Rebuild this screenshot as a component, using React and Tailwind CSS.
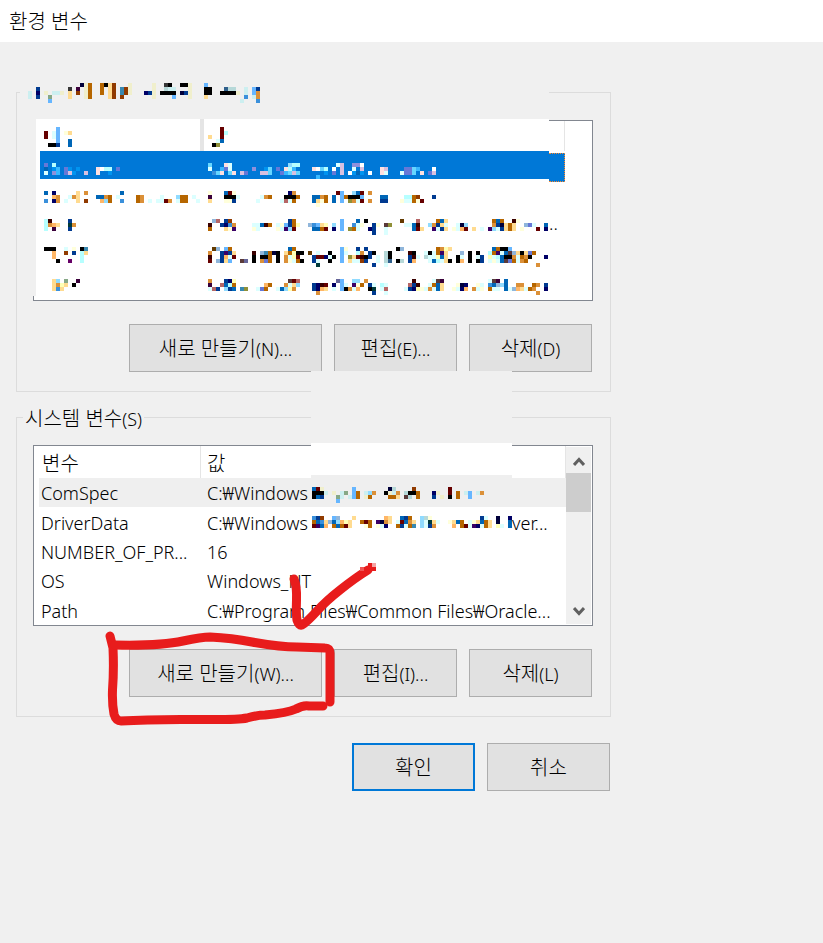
import React from "react";
import clsx from "clsx";

const CELL = 4;

// Colours of the censored blocks
const PALETTE = {
  k: "#000000", d: "#383838", i: "#00003a", n: "#000066", b: "#003a90", B: "#0066b6",
  s: "#3a90db", l: "#66b6ff", L: "#90dbff", c: "#b6ffff", C: "#dbffff", a: "#cceff0",
  o: "#db9038", O: "#b66600", e: "#903a00", p: "#ffdb90", q: "#ffb666", y: "#ffffdb",
  Y: "#ffffb6", j: "#f0efcc", r: "#660000", R: "#3a0000", m: "#3a003a", u: "#3a0066",
  g: "#86a886", t: "#3888b0", T: "#003a3a", h: "#909038", f: "#633a00", G: "#b6d8d8",
  z: "#30608c", x: "#b66666", v: "#9090db", V: "#6678d7", S: "#0094f0", K: "#38b8ff",
  A: "#66d6ff", W: "#ffffff", P: "#ffe0e0", D: "#d8c0e0", E: "#90b6db", F: "#5a3a3a",
  M: "#660066", Z: "#666699",
};

const LEGEND_MOSAIC = [
  "20ijO 25Okpe 32j 38j 41dk 45kkj 51l",
  "9b 17d 19m 21jO 25O 27pe 30te 32j 38j 41Gaa 47j 51kk 56zGG 61a 63lb",
  "7a 9n 11j 13aaj 17p 19e 21jO 25O 27pe 30te 32j 36nbj 40kkkk 45ibj 51kk 55kkkkj 61a 63lo",
  "7a 9b 12g 17p 21jO 27pe 30e 38j 43l 47j 51p 61s 63ao",
  "12l 60a 64s",
];

const USER_ROWS = [
  {
    key: "r1",
    top: 12,
    selected: true,
    mosaic: [
      "11V 13c 52A 56PC 72Lcc 84CD 88vvW",
      "11B 13SK 16VS 19S 24PWcc 29V 52C 55KVC 63v 66SA 69V 71PcK 78PWAc 83W 85D 88C 90D 95PD 101VVAK 108W",
      "11C 13vK 16VDS 21D 24P 27S 53sAP 57AP 60DV 65DDA 70VKADA 81S 83V 85D 87WSB 90S 92W 95PC 100CVVA 105P 107VD",
      "79K",
    ],
  },
  {
    key: "r2",
    top: 11,
    mosaic: [
      "11B 13n 19p 21o 30B 52y 56Bry 72no 84r 85l 88LBr 92o",
      "13qo 17Cop 24BBoO 29C 34Oo 40C 44LOO 48C 52m 56kkkC 65CoO 71kkkO 78BBoO 83B 85l 86Okkkl 95BB 101ccOe 108b",
      "11s 13no 16C 19p 21e 25qLO 30s 34Oo 37C 39CCro 44COO 49C 52p 56yyb 64C 70CxCO 78BpyO 83B 85l 87hoCr 92o 95bb 100yCCOyr",
      "79y",
    ],
  },
  {
    key: "r3",
    top: 10,
    mosaic: [
      "11cR 17b 53Ex 56be 72bO 85l 89B 91k 100f 104x 109OBp 123OBO 128Ry",
      "11coqp 17To 52R 55bnso 63CCBRO 69CylbOY 77EslpY 83L 85l 88sCy 93b 94y 96Fh 101CCBR 107LobpC 114Ci 116L 123obipOp 131EVC 136B",
      "11c 13m 17b 52O 56pyu 63yC 69yCuLr 78BBOr 83n 85l 87hOC 92nb 96C 103Brp 108uCbp 113yCqr 118p 120C 122uLCbpOp 130y 134r 136n",
      "93b 96C",
    ],
    tail: "..",
  },
  {
    key: "r4",
    top: 9,
    mosaic: [
      "11kkk 16C 18y 20kt 53fE 56lO 72BO 85ly 89b 91b 99kE 109OoYp 123BOkkl",
      "13q 16e 18b 20cp 52o 55bubp 63R 65EtOik 71pOYk 75k 77f 79C 82k 85lC 89co 92bk 96Gk 102Rk 106Ck 108COup 115E 117k 119k 122cOuCBFEpkpVO",
      "13q 20c 52R 55bqCr 63k 65kkO 69k 71oCYr 78brrn 82Ck 85l 87hprRkb 94C 96Gk 102bRC 106GC 108CYBp 114kC 117k 119Cb 122YCcBkkoCOok 136n",
      "14k 17M 20c 52r 54Ebpl 60FZ 63k 65oVO 69k 71oyCO 75k 78bC 82k 85l 87pCCeb 94C 96Gz 99kG 102bq 107C 108BcCpk 114kq 117k 119kb 122CyCBFVOCoO",
      "79T 93b 96C 134o",
    ],
  },
  {
    key: "r5",
    top: 12,
    mosaic: [
      "13pL 16g 19m 52o 56bnY 72Frx 84Z 85l 88LL 91o 103R 108CFm 122CFm 126B",
      "13poY 16p 18k 52m 55xBcO 66qO 71oCpL 78bnRr 83n 85lC 88uyO 92bC 95cC 102xbR 107COBp 114yin 119yC 122sBEL 126B 129oo 133Oo 136b",
      "13psp 52Cxb 56LbB 60th 64CVO 69CBLYo 78bnqp 83C 85lkoCq 92kT 95Cx 101CbnYyCoCBp 113yCnq 118oCy 122OCC 126BCEqpCOo 136n",
      "79o 93b 96C 134o",
    ],
  },
];

const SYSTEM_ROWS = [
  {
    name: "ComSpec",
    value: "C:₩Windows",
    selected: true,
    top: 9,
    mosaic: [
      "78Brj 88l 97iG 103e 112r",
      "78kkka 83j 85ag 88lO 91aLo 96kjao 101GkkO 108nj 112r 114O 116al 119ao",
      "78kBb 84ga 87alO 91j 92O 97OOp 101FG 104O 108b 110j 112k 114O 117l",
      "84l",
    ],
  },
  {
    name: "DriverData",
    value: "C:₩Windows",
    rest: "ver...",
    top: 8,
    mosaic: [
      "78sb 80e 83lE 88p 96qp 100BbO 105LGy 120bC 124i 127n",
      "78OBsp 82EBLqYp 90OrO 94uiop 99CrBop 105LCTpC 112ypBO 117CypBOp 124i 127B",
      "78ruBq 83OBOrp 91yO 94yCn 99ObCOt 105LCbo 113q 115Or 117CunCOp 124YC 127B",
    ],
  },
  { name: "NUMBER_OF_PR...", value: "16" },
  { name: "OS", value: "Windows_NT" },
  { name: "Path", value: "C:₩Program Files₩Common Files₩Oracle..." },
];

// Every token is a start column followed by one colour letter per block
const toBlocks = (lines, from, to) =>
  lines.flatMap((line, row) =>
    line.split(" ").flatMap((token) => {
      const start = parseInt(token, 10);
      const letters = token.replace(/^\d+/, "");
      return [...letters].map((letter, i) => ({ col: start + i, row, fill: PALETTE[letter] }));
    })
  ).filter((b) => b.fill && b.col >= from && b.col < to);

const Mosaic = ({ lines, from, to, top = 0 }) => (
  <svg
    aria-hidden="true"
    width={(to - from) * CELL}
    height={lines.length * CELL + top}
    shapeRendering="crispEdges"
    className="block shrink-0"
  >
    {toBlocks(lines, from, to).map((b, i) => (
      <rect
        key={i}
        x={(b.col - from) * CELL}
        y={b.row * CELL + top}
        width={CELL}
        height={CELL}
        fill={b.fill}
      />
    ))}
  </svg>
);

// --- Button: Korean label plus the shortcut in brackets ---
const DialogButton = ({ label, hint, wide, primary }) => (
  <button
    type="button"
    className={clsx(
      "h-12 shrink-0 bg-[#e1e1e1] pt-[2px] text-[20px] leading-6",
      wide ? "w-[193px]" : "w-[123px]",
      primary ? "border-2 border-[#0078d7]" : "border border-[#adadad]"
    )}
  >
    {label}
    {hint && <span className="text-[18px]">{hint}</span>}
  </button>
);

const ButtonRow = ({ keys }) => (
  <div className="mt-[23px] flex justify-end gap-3 pr-px">
    <DialogButton wide label="새로 만들기" hint={`(${keys[0]})...`} />
    <DialogButton label="편집" hint={`(${keys[1]})...`} />
    <DialogButton label="삭제" hint={`(${keys[2]})`} />
  </div>
);

const UserVariables = () => (
  <fieldset className="relative border border-[#dcdcdc] pr-[17px] pb-[19px] pl-4">
    <legend className="-ml-[13px] h-6 w-[529px] bg-[#f0f0f0]">
      <Mosaic lines={LEGEND_MOSAIC} from={5} to={70} top={3} />
    </legend>
    <div className="relative mt-4 h-[181px] border border-[#828790] bg-white">
      <table className="w-[531px] table-fixed border-separate border-spacing-0">
        <colgroup>
          <col className="w-[6px]" />
          <col className="w-[164px]" />
          <col className="w-[345px]" />
          <col className="w-4" />
        </colgroup>
        <thead>
          <tr className="h-[30px]">
            <th className="p-0" />
            <th className="border-r-4 border-[#e5e5e5] p-0 align-top">
              <Mosaic lines={["14l", "11r 13Cl 16yp", "11r 13Cl", "14l 17B", "12kkb 17B"]} from={10} to={50} top={6} />
            </th>
            <th className="p-0 align-top">
              <Mosaic lines={["55r", "55rc", "52p 55r", "54CB", "53kh"]} from={51} to={80} top={6} />
            </th>
            <th className="border-r border-[#e5e5e5] p-0" />
          </tr>
        </thead>
        <tbody>
          {USER_ROWS.map((row, i) => (
            <tr key={row.key} className={row.selected ? "h-[29px]" : "h-[29px]"}>
              <td className="p-0" />
              <td className="p-0 align-top">
                <div className={clsx("h-7", row.selected && "bg-[#0078d7]")}>
                  <Mosaic lines={row.mosaic} from={10} to={51} top={row.top} />
                </div>
              </td>
              <td className="p-0 align-top">
                <div className={clsx("h-7", row.selected && "bg-[#0078d7]")}>
                  <Mosaic lines={row.mosaic} from={51} to={138} top={row.top} />
                </div>
              </td>
              <td className="p-0 align-top">
                {/* The focus frame hangs slightly below its row */}
                {row.selected && (
                  <div className="relative h-7">
                    <div className="absolute top-[2px] h-[29px] w-full border border-l-0 border-dotted border-[#ff8728] bg-[#0078d7]" />
                  </div>
                )}
                {row.tail && <span className="block h-7 text-[18px] leading-7">{row.tail}</span>}
              </td>
            </tr>
          ))}
        </tbody>
      </table>
      {/* Erased edge of the list */}
      <div className="absolute -top-[2px] -left-px h-[177px] w-[3px] bg-[#f0f0f0]" />
      <div className="absolute -top-[2px] left-[2px] h-[3px] w-[513px] bg-white" />
      <div className="absolute -top-[2px] left-[166px] h-[3px] w-1 bg-[#e5e5e5]" />
    </div>
    <ButtonRow keys={["N", "E", "D"]} />
  </fieldset>
);

const ScrollBar = () => (
  <div className="my-px mr-px flex w-[25px] shrink-0 flex-col items-center bg-[#f0f0f0]">
    <button type="button" aria-label="위로" className="flex h-[26px] w-full items-center justify-center pt-[2px]">
      <svg width="12" height="9" viewBox="0 0 12 9" fill="none" stroke="#606060" strokeWidth="3">
        <path d="M1 8 L6 2.5 L11 8" />
      </svg>
    </button>
    <div className="h-[39px] w-full bg-[#cdcdcd]" />
    <button type="button" aria-label="아래로" className="mt-auto flex h-[26px] w-full items-center justify-center">
      <svg width="12" height="9" viewBox="0 0 12 9" fill="none" stroke="#606060" strokeWidth="3">
        <path d="M1 1 L6 6.5 L11 1" />
      </svg>
    </button>
  </div>
);

const SystemVariables = () => (
  <fieldset className="border border-[#dcdcdc] pr-[17px] pb-[19px] pl-4">
    <legend className="-ml-[10px] h-6 px-[2px] text-[20px] leading-7">
      시스템 변수<span className="text-[18px]">(S)</span>
    </legend>
    <div className="mt-4 flex h-[181px] border border-[#828790] bg-white">
      <table className="min-w-0 flex-1 table-fixed border-separate border-spacing-0 text-left text-[18px]">
        <colgroup>
          <col className="w-[5px]" />
          <col className="w-[162px]" />
          <col />
        </colgroup>
        <thead>
          <tr className="h-8">
            <th className="p-0" />
            <th className="border-r border-[#e5e5e5] p-0 pt-1 pl-[3px] text-[20px] leading-6 font-light">변수</th>
            <th className="border-r border-[#e5e5e5] p-0 pt-1 pl-[6px] text-[20px] leading-6 font-light">값</th>
          </tr>
        </thead>
        <tbody>
          {SYSTEM_ROWS.map((row) => (
            <tr key={row.name} className="h-[29px] leading-[27px] whitespace-nowrap">
              <td className="p-0" />
              <td className={clsx("p-0 pt-[2px] pl-[2px]", row.selected && "bg-[#efefef]")}>{row.name}</td>
              <td className={clsx("p-0 pl-[6px]", row.selected && "bg-[#efefef]")}>
                <div className="flex h-[29px]">
                  <span className={clsx("shrink-0 pt-[2px]", row.mosaic && "w-[105px]")}>{row.value}</span>
                  {row.mosaic && <Mosaic lines={row.mosaic} from={78} to={128} top={row.top} />}
                  {row.rest && <span className="pt-[2px]">{row.rest}</span>}
                </div>
              </td>
            </tr>
          ))}
        </tbody>
      </table>
      <ScrollBar />
    </div>
    <ButtonRow keys={["W", "I", "L"]} />
  </fieldset>
);

// Red pen marks: a loop round the "new" button and a tick above it
const PenMarks = () => (
  <svg
    aria-hidden="true"
    viewBox="16 405 595 312"
    className="pointer-events-none absolute top-0 left-0 h-[312px] w-[595px] overflow-visible"
    fill="none"
    stroke="#e81c1c"
    strokeWidth="9"
    strokeLinecap="round"
    strokeLinejoin="round"
  >
    <path d="M110 636 L113 648 Q114 670 112.500 690 Q112 704 114 714 Q116 721 121 721 Q150 719 200 719.500 Q237 720 247 718 Q258 715 265 715 Q287 713 296 709 Q303 705 309 706 L323 706" />
    <path d="M115 645 Q160 646 183 641 Q202 637 210 637 Q232 638 252 642 Q280 647 297 647 L325 648 Q330 648 330 653 L330 702" />
    <path d="M294 579 Q297 586 296.500 600 Q296 615 297 620 Q299 626 302 625 Q307 622 317 611 Q326 601 340 590 Q355 578 368 570" />
    <g stroke="none" shapeRendering="crispEdges">
      <path fill="#e81c1c" d="M368 563h4v4h4v4h-12v-4h4z" />
      <path fill="#f5a3a3" d="M372 563h4v4h-4z" />
      <path fill="#ee5555" d="M360 567h4v4h-4z" />
    </g>
  </svg>
);

const App = () => (
  <div className="min-h-screen bg-[#f0f0f0] font-['Noto_Sans','Noto_Sans_CJK_KR',sans-serif] font-light text-black">
    <header className="flex h-[42px] items-center bg-white pt-[2px] pl-[9px]">
      <h1 className="text-[20px] leading-6">환경 변수</h1>
    </header>

    <main className="ml-4 w-full max-w-[595px] pt-[38px]">
      <UserVariables />

      <div className="relative mt-[13px]">
        <SystemVariables />
        {/* Erased area between the two groups */}
        <div className="absolute -top-[34px] left-[295px] w-[201px]">
          <div className="h-[72px] bg-[#f0f0f0]" />
          <div className="h-8 bg-white" />
          <div className="h-[3px] bg-[#efefef]" />
        </div>
        <PenMarks />
      </div>

      <div className="mt-[26px] flex justify-end gap-3 pr-px">
        <DialogButton label="확인" primary />
        <DialogButton label="취소" />
      </div>
    </main>
  </div>
);

export default App;
